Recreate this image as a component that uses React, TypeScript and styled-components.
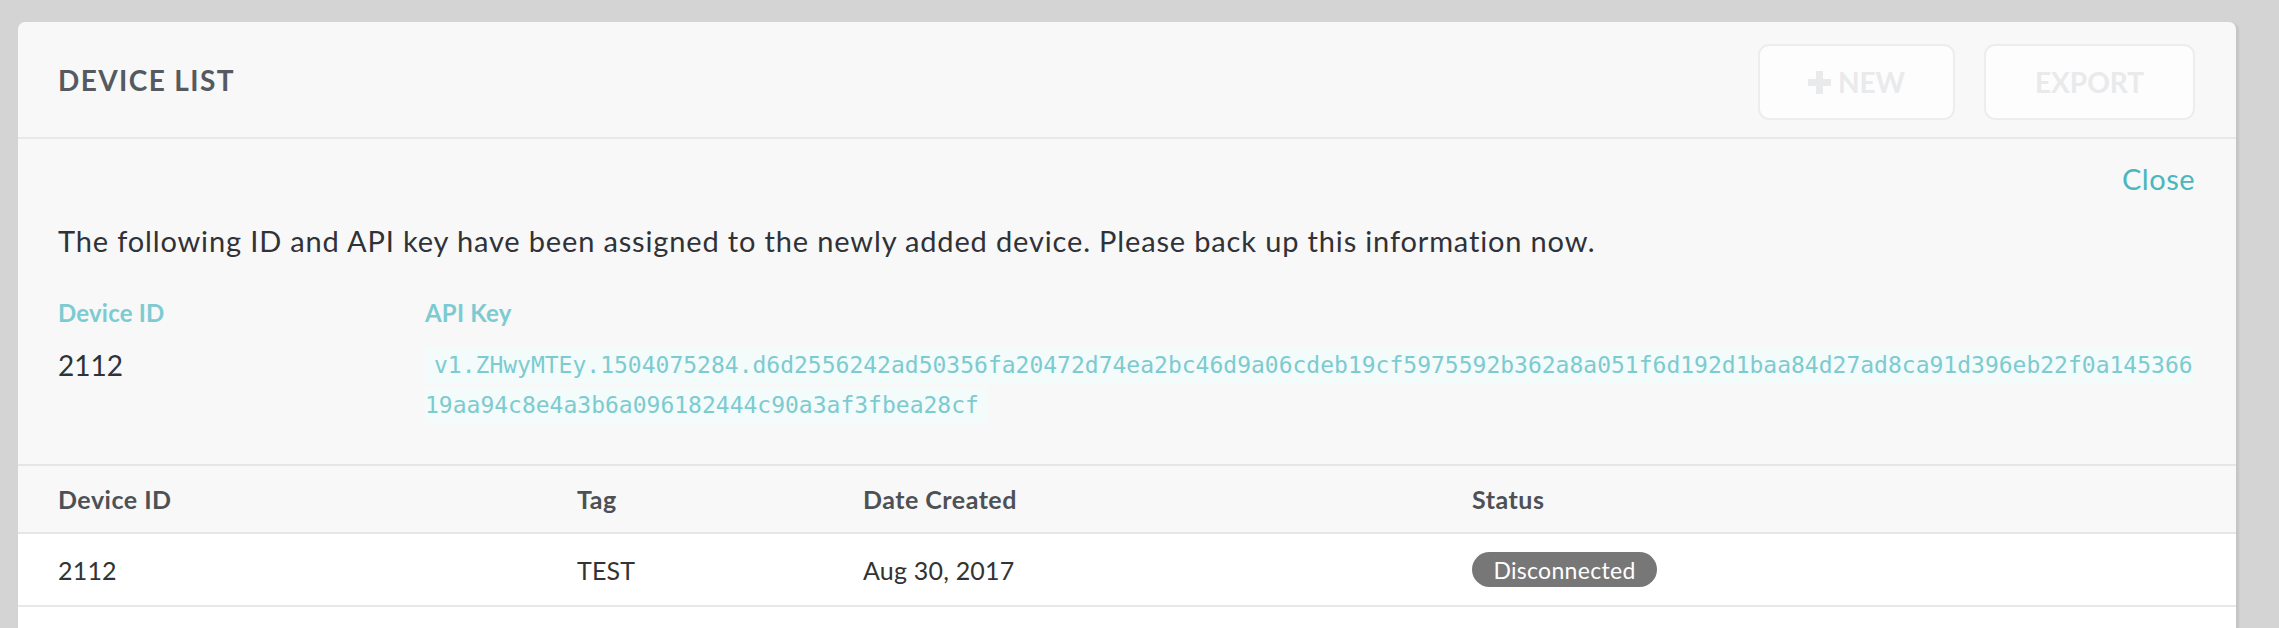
import styled, { createGlobalStyle } from 'styled-components';

const GlobalStyle = createGlobalStyle`
  html, body {
    margin: 0;
    padding: 0;
    background: #d4d4d4;
  }
  body {
    font-family: Lato, "Open Sans", sans-serif;
    color: #333;
  }
`;

const Page = styled.div`
  padding: 22px 43px 0 18px;
  height: 628px;
  box-sizing: border-box;
  overflow: hidden;
`;

const Card = styled.div`
  background: #f8f8f8;
  border-radius: 7px 7px 0 0;
  box-shadow: 3px 1px 2px rgba(0, 0, 0, 0.07);
  min-height: 700px;
`;

const Header = styled.div`
  display: flex;
  align-items: center;
  justify-content: space-between;
  height: 117px;
  box-sizing: border-box;
  padding: 0 41px 0 40px;
  border-bottom: 2px solid #e8e8e8;
`;

const Title = styled.h1`
  margin: 0;
  font-size: 28px;
  font-weight: 700;
  letter-spacing: 1.4px;
  color: #555a60;
`;

const Actions = styled.div`
  display: flex;
  gap: 29px;
  padding-top: 5px;
`;

const ActionButton = styled.button<{ $width: number }>`
  display: flex;
  align-items: center;
  justify-content: center;
  gap: 7px;
  width: ${p => p.$width}px;
  height: 76px;
  border: 2px solid #ededed;
  border-radius: 11px;
  background: #fdfdfd;
  color: #e9eaec;
  font-family: Lato, sans-serif;
  font-size: 28px;
  font-weight: 700;
  cursor: pointer;
`;

const InfoPanel = styled.div`
  padding: 22px 41px 38px 40px;
  border-bottom: 2px solid #e6e6e6;
`;

const CloseRow = styled.div`
  text-align: right;
`;

const CloseLink = styled.a`
  font-size: 29px;
  line-height: 36px;
  letter-spacing: 0.5px;
  color: #4ab6be;
  cursor: pointer;
`;

const Notice = styled.p`
  margin: 26px 0 38px;
  font-size: 29px;
  line-height: 36px;
  letter-spacing: 0.85px;
  color: #2f3237;
`;

const KeyGrid = styled.div`
  display: grid;
  grid-template-columns: 367px 1fr;
`;

const KeyLabel = styled.div`
  font-size: 24px;
  font-weight: 700;
  line-height: 32px;
  letter-spacing: 0.2px;
  color: #7ccbd1;
  margin-bottom: 17px;
`;

const KeyValue = styled.div`
  font-size: 28px;
  line-height: 38px;
  color: #2f3237;
`;

const ApiKey = styled.div`
  line-height: 38px;
  word-break: break-all;
`;

const Code = styled.code`
  font-family: "DejaVu Sans Mono", "Liberation Mono", monospace;
  font-size: 23px;
  color: #7ccbd0;
  background: #f3fbfb;
  padding: 5px 8px 5px 9px;
`;

const Table = styled.div`
  display: grid;
  grid-template-columns: 559px 286px 609px 1fr;
`;

const HeadCell = styled.div<{ $first?: boolean }>`
  height: 66px;
  padding-left: ${p => (p.$first ? 40 : 0)}px;
  display: flex;
  align-items: center;
  font-size: 25px;
  font-weight: 700;
  letter-spacing: 0.5px;
  color: #4d5156;
  border-bottom: 2px solid #e6e6e6;
`;

const Cell = styled.div<{ $first?: boolean }>`
  height: 71px;
  padding-left: ${p => (p.$first ? 40 : 0)}px;
  display: flex;
  align-items: center;
  background: #fff;
  font-size: 25px;
  letter-spacing: 0.2px;
  color: #333;
  border-bottom: 2px solid #e8e8e8;
`;

const Filler = styled.div`
  background: #fff;
  height: 120px;
`;

const Badge = styled.span`
  display: inline-flex;
  align-items: center;
  justify-content: center;
  width: 185px;
  height: 35px;
  border-radius: 18px;
  background: #777;
  color: #fff;
  font-size: 23px;
  letter-spacing: 0.3px;
`;

const PlusIcon = () => (
  <svg width="23" height="23" viewBox="0 0 23 23" fill="#e9eaec">
    <rect x="8" y="0" width="7" height="23" />
    <rect x="0" y="8" width="23" height="7" />
  </svg>
);

const apiKey =
  'v1.ZHwyMTEy.1504075284.d6d2556242ad50356fa20472d74ea2bc46d9a06cdeb19cf5975592b362a8a051f6d192d1baa84d27ad8ca91d396eb22f0a14536619aa94c8e4a3b6a096182444c90a3af3fbea28cf';

const devices = [
  { id: '2112', tag: 'TEST', created: 'Aug 30, 2017', status: 'Disconnected' },
];

export default function App() {
  return (
    <>
      <GlobalStyle />
      <Page>
        <Card>
          <Header>
            <Title>DEVICE LIST</Title>
            <Actions>
              <ActionButton $width={197}>
                <PlusIcon />
                NEW
              </ActionButton>
              <ActionButton $width={211}>EXPORT</ActionButton>
            </Actions>
          </Header>

          <InfoPanel>
            <CloseRow>
              <CloseLink>Close</CloseLink>
            </CloseRow>
            <Notice>
              The following ID and API key have been assigned to the newly added
              device. Please back up this information now.
            </Notice>
            <KeyGrid>
              <div>
                <KeyLabel>Device ID</KeyLabel>
                <KeyValue>2112</KeyValue>
              </div>
              <div>
                <KeyLabel>API Key</KeyLabel>
                <ApiKey>
                  <Code>{apiKey}</Code>
                </ApiKey>
              </div>
            </KeyGrid>
          </InfoPanel>

          <Table>
            <HeadCell $first>Device ID</HeadCell>
            <HeadCell>Tag</HeadCell>
            <HeadCell>Date Created</HeadCell>
            <HeadCell>Status</HeadCell>
            {devices.map(d => (
              <>
                <Cell $first key={d.id}>{d.id}</Cell>
                <Cell>{d.tag}</Cell>
                <Cell>{d.created}</Cell>
                <Cell>
                  <Badge>{d.status}</Badge>
                </Cell>
              </>
            ))}
          </Table>
          <Filler />
        </Card>
      </Page>
    </>
  );
}
